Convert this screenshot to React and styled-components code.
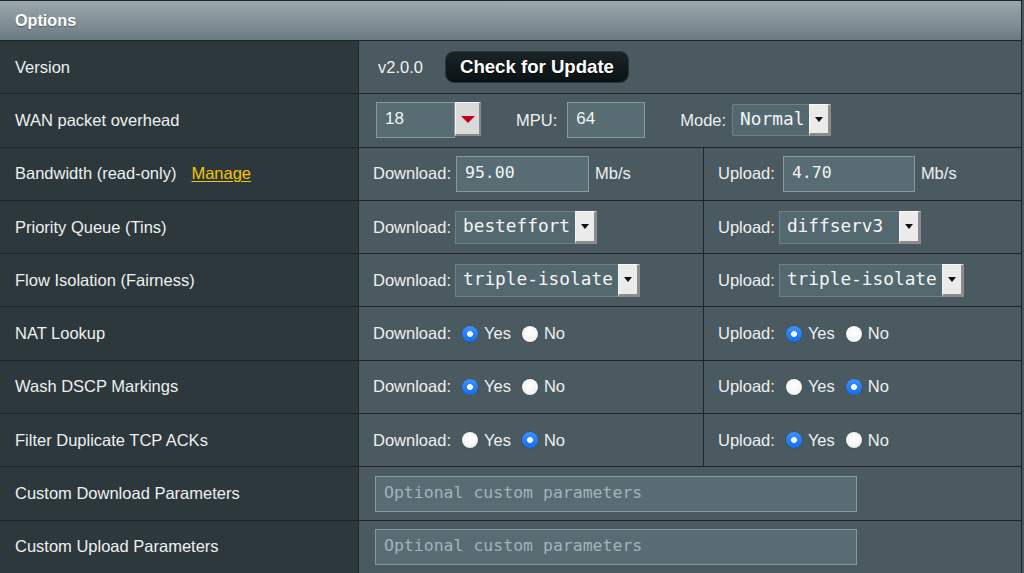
import React from "react";
import styled, { createGlobalStyle } from "styled-components";

const Global = createGlobalStyle`
  html, body { margin: 0; padding: 0; background: #4a5a60; }
  body { font-family: "Liberation Sans", Arial, sans-serif; }
  * { box-sizing: border-box; }
`;

const Table = styled.div`
  width: 1022px;
  border-top: 1px solid #1e2629;
  border-right: 1px solid #1e2629;
  display: flex;
  flex-direction: column;
`;

const Header = styled.div`
  height: 40px;
  display: flex;
  align-items: center;
  padding-left: 15px;
  background: linear-gradient(#9ba8ae, #6c7b82);
  border-bottom: 1px solid #1e2629;
  color: #fff;
  font-weight: bold;
  font-size: 16.2px;
  text-shadow: 0 1px 1px rgba(0, 0, 0, 0.35);
`;

const Row = styled.div`
  height: 53.3px;
  display: flex;
  border-bottom: 1px solid #1e2629;
`;

const Label = styled.div`
  width: 359px;
  flex: none;
  background: #2d383c;
  border-right: 1px solid #1e2629;
  display: flex;
  align-items: center;
  padding-left: 15px;
  color: #eef0f0;
  font-size: 16.5px;
`;

const Manage = styled.a`
  margin-left: 15px;
  color: #f6c500;
  text-decoration: underline;
  text-underline-offset: 2px;
  cursor: pointer;
`;

const Value = styled.div`
  flex: 1;
  background: #4a5a60;
  display: flex;
  align-items: center;
  padding-left: 14px;
  color: #eef0f0;
  font-size: 16.5px;
`;

const Half = styled.div`
  width: ${(p) => (p.$first ? "345px" : "auto")};
  flex: ${(p) => (p.$first ? "none" : "1")};
  background: #4a5a60;
  border-right: ${(p) => (p.$first ? "1px solid #1e2629" : "none")};
  display: flex;
  align-items: center;
  padding-left: 14px;
  color: #eef0f0;
  font-size: 16.5px;
`;

const VersionText = styled.span`
  margin-left: 5px;
`;

const UpdateButton = styled.button`
  margin-left: 22px;
  height: 32px;
  width: 184px;
  border-radius: 9px;
  border: 1px solid #2b3538;
  background: linear-gradient(#1a2326, #0b1214);
  color: #fff;
  font-family: "Liberation Sans", Arial, sans-serif;
  font-weight: bold;
  font-size: 18.6px;
  text-shadow: 0 1px 1px rgba(0, 0, 0, 0.6);
  padding: 0;
`;

const TextInput = styled.input`
  width: ${(p) => p.$w}px;
  height: 36px;
  margin-left: ${(p) => p.$ml || 0}px;
  background: #586c73;
  border: 1px solid #8a999e;
  color: #f2f4f4;
  font-family: ${(p) =>
    p.$sans ? '"Liberation Sans", Arial, sans-serif' : '"DejaVu Sans Mono", monospace'};
  font-size: ${(p) => (p.$sans ? "17px" : "16.5px")};
  padding: 0 0 2px 8px;
  outline: none;
  &::placeholder {
    color: #a3b3b8;
  }
`;

const Unit = styled.span`
  margin-left: 6px;
`;

const FieldLabel = styled.span`
  margin-left: ${(p) => p.$ml || 0}px;
`;

const Combo = styled.div`
  display: flex;
  margin-left: ${(p) => p.$ml || 0}px;
`;

const ComboArrow = styled.div`
  width: 26px;
  height: 34px;
  background: #dadada;
  border-top: 1px solid #f2f2f2;
  border-left: 1px solid #f2f2f2;
  border-right: 2px solid #8a8a8a;
  border-bottom: 2px solid #8a8a8a;
  display: flex;
  align-items: center;
  justify-content: center;
`;

const RedTriangle = styled.div`
  width: 0;
  height: 0;
  border-left: 7px solid transparent;
  border-right: 7px solid transparent;
  border-top: 7px solid #c4001c;
  margin-top: 2px;
`;

const SelectBox = styled.div`
  display: flex;
  height: ${(p) => p.$h}px;
  margin-left: ${(p) => p.$ml || 0}px;
`;

const SelectValue = styled.div`
  width: ${(p) => p.$w}px;
  height: 100%;
  background: #546870;
  border: 1px solid #6f8086;
  border-right: none;
  color: #f4f6f6;
  font-family: "DejaVu Sans Mono", monospace;
  font-size: 17.8px;
  display: flex;
  align-items: center;
  padding: 0 0 3px 7px;
  white-space: nowrap;
`;

const SelectArrow = styled.div`
  width: 22px;
  height: 100%;
  background: #ebebeb;
  border-top: 1px solid #f8f8f8;
  border-left: 1px solid #f4f4f4;
  border-right: 3px solid #8c8c8c;
  border-bottom: 3px solid #8c8c8c;
  display: flex;
  align-items: center;
  justify-content: center;
`;

const BlackTriangle = styled.div`
  width: 0;
  height: 0;
  border-left: 4px solid transparent;
  border-right: 4px solid transparent;
  border-top: 5px solid #111;
`;

const Radio = styled.input.attrs({ type: "radio" })`
  appearance: none;
  -webkit-appearance: none;
  width: 16px;
  height: 16px;
  margin: 0 6px 0 ${(p) => p.$ml}px;
  border-radius: 50%;
  background: radial-gradient(circle at 50% 40%, #ffffff 0, #f4f4f4 60%, #e2e2e2 100%);
  border: none;
  box-shadow: 0 0 0 0.5px rgba(0, 0, 0, 0.25);
  &:checked {
    background: radial-gradient(circle, #ffffff 0 2.6px, transparent 3.2px),
      linear-gradient(#3b93fb, #0f6ff0);
  }
`;

const RadioText = styled.span``;

function Select({ value, w, h = 33, ml = 4 }) {
  return (
    <SelectBox $h={h} $ml={ml}>
      <SelectValue $w={w}>{value}</SelectValue>
      <SelectArrow>
        <BlackTriangle />
      </SelectArrow>
    </SelectBox>
  );
}

function RadioPair({ name, yes }) {
  return (
    <>
      <Radio name={name} defaultChecked={yes} $ml={11} />
      <RadioText>Yes</RadioText>
      <Radio name={name} defaultChecked={!yes} $ml={11} />
      <RadioText>No</RadioText>
    </>
  );
}

export default function App() {
  return (
    <>
      <Global />
      <Table>
        <Header>Options</Header>

        <Row>
          <Label>Version</Label>
          <Value>
            <VersionText>v2.0.0</VersionText>
            <UpdateButton>Check for Update</UpdateButton>
          </Value>
        </Row>

        <Row>
          <Label>WAN packet overhead</Label>
          <Value>
            <Combo $ml={3}>
              <TextInput $w={79} $sans readOnly defaultValue="18" />
              <ComboArrow>
                <RedTriangle />
              </ComboArrow>
            </Combo>
            <FieldLabel $ml={35}>MPU:</FieldLabel>
            <TextInput $w={78} $ml={10} $sans readOnly defaultValue="64" />
            <FieldLabel $ml={35}>Mode:</FieldLabel>
            <Select value="Normal" w={77} h={32} ml={6} />
          </Value>
        </Row>

        <Row>
          <Label>
            Bandwidth (read-only)
            <Manage>Manage</Manage>
          </Label>
          <Half $first>
            Download:
            <TextInput $w={133} $ml={5} readOnly defaultValue="95.00" />
            <Unit>Mb/s</Unit>
          </Half>
          <Half>
            Upload:
            <TextInput $w={132} $ml={8} readOnly defaultValue="4.70" />
            <Unit>Mb/s</Unit>
          </Half>
        </Row>

        <Row>
          <Label>Priority Queue (Tins)</Label>
          <Half $first>
            Download:
            <Select value="besteffort" w={120} />
          </Half>
          <Half>
            Upload:
            <Select value="diffserv3" w={120} />
          </Half>
        </Row>

        <Row>
          <Label>Flow Isolation (Fairness)</Label>
          <Half $first>
            Download:
            <Select value="triple-isolate" w={163} />
          </Half>
          <Half>
            Upload:
            <Select value="triple-isolate" w={163} />
          </Half>
        </Row>

        <Row>
          <Label>NAT Lookup</Label>
          <Half $first>
            Download:
            <RadioPair name="nat-dl" yes />
          </Half>
          <Half>
            Upload:
            <RadioPair name="nat-ul" yes />
          </Half>
        </Row>

        <Row>
          <Label>Wash DSCP Markings</Label>
          <Half $first>
            Download:
            <RadioPair name="wash-dl" yes />
          </Half>
          <Half>
            Upload:
            <RadioPair name="wash-ul" yes={false} />
          </Half>
        </Row>

        <Row>
          <Label>Filter Duplicate TCP ACKs</Label>
          <Half $first>
            Download:
            <RadioPair name="ack-dl" yes={false} />
          </Half>
          <Half>
            Upload:
            <RadioPair name="ack-ul" yes />
          </Half>
        </Row>

        <Row>
          <Label>Custom Download Parameters</Label>
          <Value>
            <TextInput $w={482} $ml={2} readOnly placeholder="Optional custom parameters" />
          </Value>
        </Row>

        <Row>
          <Label>Custom Upload Parameters</Label>
          <Value>
            <TextInput $w={482} $ml={2} readOnly placeholder="Optional custom parameters" />
          </Value>
        </Row>
      </Table>
    </>
  );
}
